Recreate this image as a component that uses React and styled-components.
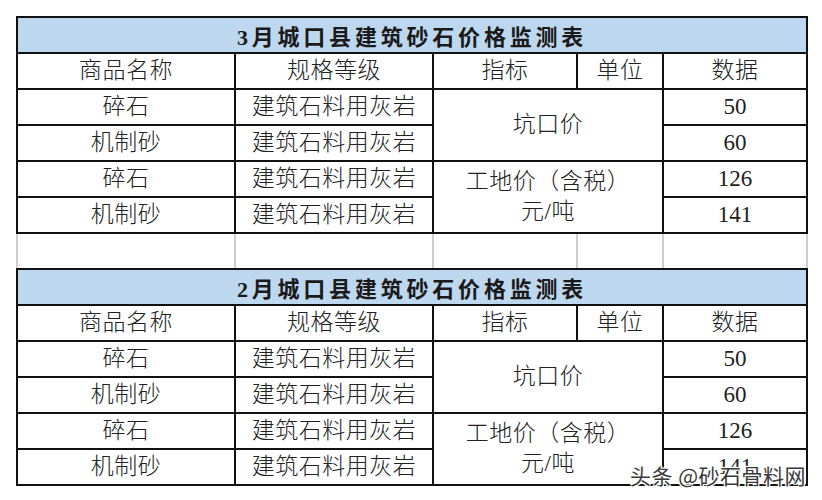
import React from 'react';
import styled, { createGlobalStyle } from 'styled-components';

const GlobalStyle = createGlobalStyle`
  html, body {
    margin: 0;
    padding: 0;
    background: #ffffff;
  }
  body {
    font-family: 'Liberation Serif', 'Noto Sans CJK SC', serif;
  }
`;

const Page = styled.div`
  position: relative;
  width: 822px;
  height: 500px;
  padding: 16px 0 0 16px;
  box-sizing: border-box;
  overflow: hidden;
`;

const Table = styled.table`
  width: 790px;
  table-layout: fixed;
  border-collapse: collapse;
  color: #222;
`;

const Col = styled.col`
  width: ${p => p.$w}px;
`;

const TitleCell = styled.td`
  height: 34px;
  padding: 0;
  background: #bdd7ee;
  border: 2px solid #111;
  text-align: center;
  font-size: 22px;
  font-weight: 700;
  letter-spacing: 3.8px;
  color: #1a1a1a;
`;

const Cell = styled.td`
  height: 34px;
  padding: 0;
  border: 2px solid #111;
  text-align: center;
  vertical-align: middle;
  font-size: 23px;
  font-weight: 300;
  line-height: 30px;
  letter-spacing: ${p => (p.$spaced ? '0.5px' : '0')};
  white-space: nowrap;
`;

const GapCell = styled.td`
  height: 34px;
  padding: 0;
  border-left: 2px solid #cfcfcf;
  border-right: 2px solid #cfcfcf;
`;

const Watermark = styled.div`
  position: absolute;
  right: 16px;
  top: 460px;
  font-family: 'Noto Sans CJK SC', sans-serif;
  font-size: 21px;
  color: #3a3a3a;
  letter-spacing: 0.5px;
  text-shadow:
    1px 1px 0 #fff, -1px -1px 0 #fff, 1px -1px 0 #fff, -1px 1px 0 #fff,
    0 0 3px rgba(255, 255, 255, 0.9);
`;

const widths = [218, 198, 144, 86, 144];

const rows = [
  { name: '碎石', value: '50' },
  { name: '机制砂', value: '60' },
  { name: '碎石', value: '126' },
  { name: '机制砂', value: '141' },
];

const Cols = () => (
  <colgroup>
    {widths.map((w, i) => <Col key={i} $w={w} />)}
  </colgroup>
);

const PriceTable = ({ month }) => (
  <Table>
    <Cols />
    <tbody>
      <tr>
        <TitleCell colSpan={5}>{month}月城口县建筑砂石价格监测表</TitleCell>
      </tr>
      <tr>
        <Cell $spaced>商品名称</Cell>
        <Cell $spaced>规格等级</Cell>
        <Cell $spaced>指标</Cell>
        <Cell $spaced>单位</Cell>
        <Cell $spaced>数据</Cell>
      </tr>
      {rows.map((r, i) => (
        <tr key={i}>
          <Cell $spaced>{r.name}</Cell>
          <Cell $spaced>建筑石料用灰岩</Cell>
          {i === 0 && <Cell colSpan={2} rowSpan={2} $spaced>坑口价</Cell>}
          {i === 2 && (
            <Cell colSpan={2} rowSpan={2} $spaced>
              工地价（含税）<br />元/吨
            </Cell>
          )}
          <Cell>{r.value}</Cell>
        </tr>
      ))}
    </tbody>
  </Table>
);

const GapRow = () => (
  <Table>
    <Cols />
    <tbody>
      <tr>
        {widths.map((w, i) => <GapCell key={i} />)}
      </tr>
    </tbody>
  </Table>
);

export default function App() {
  return (
    <>
      <GlobalStyle />
      <Page>
        <PriceTable month={3} />
        <GapRow />
        <PriceTable month={2} />
        <Watermark>头条 @砂石骨料网</Watermark>
      </Page>
    </>
  );
}
